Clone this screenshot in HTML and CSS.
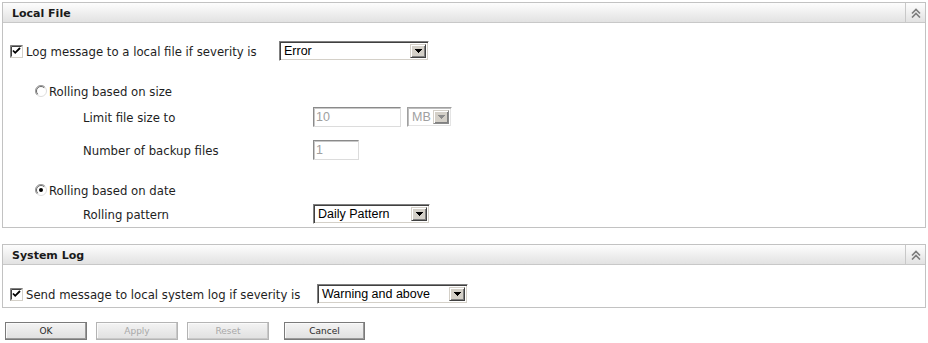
FILE: index.html
```html
<!DOCTYPE html>
<html lang="en">

<head>
  <meta charset="UTF-8">
  <meta name="viewport" content="width=device-width, initial-scale=1.0">
  <title>Log Settings</title>
  <link rel="stylesheet" href="styles.css">
</head>

<body>
  <div class="page">

    <!-- Local File -->
    <div class="panel">
      <div class="panel-head">
        <span class="panel-title">Local File</span>
        <span class="panel-toggle">
          <svg width="10" height="10" viewBox="0 0 10 10"><path d="M1 5.5L5 1.5L9 5.5M1 9.5L5 5.5L9 9.5" fill="none" stroke="#7c7c7c" stroke-width="1.6"/></svg>
        </span>
      </div>
      <div class="panel-body local-body">
        <div class="row">
          <span class="check">
            <svg width="13" height="13" viewBox="0 0 13 13"><rect x="0.5" y="0.5" width="12" height="12" fill="#fff" stroke="#d4d0c8"/><path d="M0.5 12.5V0.5H12.5" fill="none" stroke="#808080"/><path d="M1.5 11.5V1.5H11.5" fill="none" stroke="#404040"/><path d="M3 5.5L5.2 7.8L10 3" fill="none" stroke="#000" stroke-width="1.8"/></svg>
          </span>
          <span class="check-label local-label">Log message to a local file if severity is</span>
          <span class="select sel-error"><span class="select-value">Error</span><span class="select-btn"><svg width="7" height="4" viewBox="0 0 7 4"><path d="M0 0H7V1H6V2H5V3H4V4H3V3H2V2H1V1H0Z"/></svg></span></span>
        </div>

        <div class="row radio-row size-row">
          <span class="radio">
            <svg width="12" height="12" viewBox="0 0 12 12"><circle cx="6" cy="6" r="5.5" fill="#fff" stroke="#dcdcdc"/><path d="M2.1 9.9A5.5 5.5 0 0 1 9.9 2.1" fill="none" stroke="#9a9a9a"/><path d="M2.8 9.2A4.5 4.5 0 0 1 9.2 2.8" fill="none" stroke="#6a6a6a"/></svg>
          </span>
          <span>Rolling based on size</span>
        </div>

        <div class="row field-row limit-row">
          <span class="field-label">Limit file size to</span>
          <input class="text-input inp-size" type="text" value="10" disabled>
          <span class="select disabled sel-unit"><span class="select-value">MB</span><span class="select-btn"><svg width="7" height="4" viewBox="0 0 7 4"><path d="M0 0H7V1H6V2H5V3H4V4H3V3H2V2H1V1H0Z"/></svg></span></span>
        </div>

        <div class="row field-row backup-row">
          <span class="field-label">Number of backup files</span>
          <input class="text-input inp-backup" type="text" value="1" disabled>
        </div>

        <div class="row radio-row date-row">
          <span class="radio">
            <svg width="12" height="12" viewBox="0 0 12 12"><circle cx="6" cy="6" r="5.5" fill="#fff" stroke="#dcdcdc"/><path d="M2.1 9.9A5.5 5.5 0 0 1 9.9 2.1" fill="none" stroke="#9a9a9a"/><path d="M2.8 9.2A4.5 4.5 0 0 1 9.2 2.8" fill="none" stroke="#6a6a6a"/><circle cx="6" cy="6" r="2" fill="#000"/></svg>
          </span>
          <span>Rolling based on date</span>
        </div>

        <div class="row field-row pattern-row">
          <span class="field-label">Rolling pattern</span>
          <span class="select sel-pattern"><span class="select-value">Daily Pattern</span><span class="select-btn"><svg width="7" height="4" viewBox="0 0 7 4"><path d="M0 0H7V1H6V2H5V3H4V4H3V3H2V2H1V1H0Z"/></svg></span></span>
        </div>
      </div>
    </div>

    <!-- System Log -->
    <div class="panel">
      <div class="panel-head">
        <span class="panel-title">System Log</span>
        <span class="panel-toggle">
          <svg width="10" height="10" viewBox="0 0 10 10"><path d="M1 5.5L5 1.5L9 5.5M1 9.5L5 5.5L9 9.5" fill="none" stroke="#7c7c7c" stroke-width="1.6"/></svg>
        </span>
      </div>
      <div class="panel-body syslog-body">
        <div class="row">
          <span class="check">
            <svg width="13" height="13" viewBox="0 0 13 13"><rect x="0.5" y="0.5" width="12" height="12" fill="#fff" stroke="#d4d0c8"/><path d="M0.5 12.5V0.5H12.5" fill="none" stroke="#808080"/><path d="M1.5 11.5V1.5H11.5" fill="none" stroke="#404040"/><path d="M3 5.5L5.2 7.8L10 3" fill="none" stroke="#000" stroke-width="1.8"/></svg>
          </span>
          <span class="check-label syslog-label">Send message to local system log if severity is</span>
          <span class="select sel-warning"><span class="select-value">Warning and above</span><span class="select-btn"><svg width="7" height="4" viewBox="0 0 7 4"><path d="M0 0H7V1H6V2H5V3H4V4H3V3H2V2H1V1H0Z"/></svg></span></span>
        </div>
      </div>
    </div>

    <!-- Actions -->
    <div class="actions">
      <button class="btn">OK</button>
      <button class="btn" disabled>Apply</button>
      <button class="btn" disabled>Reset</button>
      <button class="btn btn-cancel">Cancel</button>
    </div>

  </div>
</body>

</html>
```

FILE: styles.css
```css
body {
  margin: 0;
  font-family: "DejaVu Sans", Verdana, sans-serif;
  font-size: 11.7px;
  color: #1e1e1e;
  background: #fff;
}

.page {
  width: 924px;
  padding: 2px 0 0 2px;
}

.panel {
  border: 1px solid #c2c2c2;
}

.panel + .panel {
  margin-top: 16px;
}

.panel-head {
  display: flex;
  height: 19px;
  border-bottom: 1px solid #c8c8c8;
  background: linear-gradient(#fdfdfd, #e2e2e2);
}

.panel-title {
  flex: 1;
  padding: 1px 0 0 9px;
  font-size: 11px;
  font-weight: bold;
  line-height: 19px;
  color: #1a1a1a;
}

.panel-toggle {
  width: 19px;
  border-left: 1px solid #c8c8c8;
  display: flex;
  align-items: center;
  justify-content: center;
}

.panel-body {
  padding-left: 7px;
}

.local-body {
  padding-top: 18px;
  padding-bottom: 3px;
}

.syslog-body {
  padding-top: 19px;
  padding-bottom: 3px;
}

.row {
  display: flex;
  align-items: center;
  height: 20px;
}

.check {
  display: flex;
  width: 13px;
  margin-right: 3px;
}

.check-label,
.field-label,
.radio-row span:last-child {
  padding-top: 1px;
}

.local-label {
  width: 253px;
}

.syslog-label {
  width: 291px;
}

.radio-row {
  margin-left: 25px;
}

.radio {
  display: flex;
  width: 12px;
  margin-right: 2px;
}

.size-row {
  margin-top: 20px;
}

.limit-row {
  margin-top: 6px;
}

.backup-row {
  margin-top: 13px;
}

.date-row {
  margin-top: 20px;
}

.pattern-row {
  margin-top: 4px;
}

.field-label {
  width: 230px;
  margin-left: 73px;
}

/* classic inset controls */
.text-input {
  box-sizing: border-box;
  height: 20px;
  padding: 0 2px;
  border: 1px solid;
  border-color: #8a8a8a #dcdcdc #dcdcdc #8a8a8a;
  box-shadow: inset 1px 1px #c8c8c8;
  background: #fff;
  font-family: "Liberation Sans", Arial, sans-serif;
  font-size: 12.5px;
  color: #a0a0a0;
  outline: none;
}

.inp-size {
  width: 88px;
}

.inp-backup {
  width: 46px;
}

.select {
  box-sizing: border-box;
  display: inline-flex;
  height: 20px;
  border: 1px solid;
  border-color: #808080 #fff #fff #808080;
  box-shadow: inset 1px 1px #404040, inset -1px -1px #d4d0c8;
  background: #fff;
  padding: 2px;
  font-family: "Liberation Sans", Arial, sans-serif;
  font-size: 12.5px;
  color: #000;
}

.select-value {
  flex: 1;
  padding-left: 2px;
  line-height: 15px;
  white-space: nowrap;
}

.select-btn {
  box-sizing: border-box;
  width: 16px;
  display: flex;
  align-items: center;
  justify-content: center;
  background: #d4d0c8;
  border: 1px solid;
  border-color: #d4d0c8 #404040 #404040 #d4d0c8;
  box-shadow: inset 1px 1px #fff, inset -1px -1px #808080;
}

.select.disabled {
  border-color: #a0a0a0 #fff #fff #a0a0a0;
  box-shadow: inset 1px 1px #bdbdbd, inset -1px -1px #e4e4e4;
  color: #a0a0a0;
}

.select.disabled .select-btn {
  border-color: #d4d0c8 #8a8a8a #8a8a8a #d4d0c8;
}

.select.disabled svg {
  fill: #8c8c8c;
}

.sel-error {
  width: 150px;
}

.sel-unit {
  width: 45px;
  margin-left: 6px;
}

.sel-pattern {
  width: 117px;
}

.sel-warning {
  width: 151px;
}

.actions {
  display: flex;
  gap: 9px;
  margin: 14px 0 0 3px;
}

.btn {
  box-sizing: border-box;
  width: 82px;
  height: 18px;
  padding: 0;
  border: 1px solid #7a7a7a;
  box-shadow: inset -1px -1px #9a9a9a, inset 1px 1px #fafafa;
  background: linear-gradient(#f3f3f3, #e0e0e0);
  font-family: "DejaVu Sans", Verdana, sans-serif;
  font-size: 9px;
  color: #2a2a2a;
}

.btn:disabled {
  border-color: #b4b4b4;
  box-shadow: inset -1px -1px #c8c8c8, inset 1px 1px #fafafa;
  color: #a8a8a8;
}

.btn-cancel {
  width: 81px;
  margin-left: 6px;
}
```
